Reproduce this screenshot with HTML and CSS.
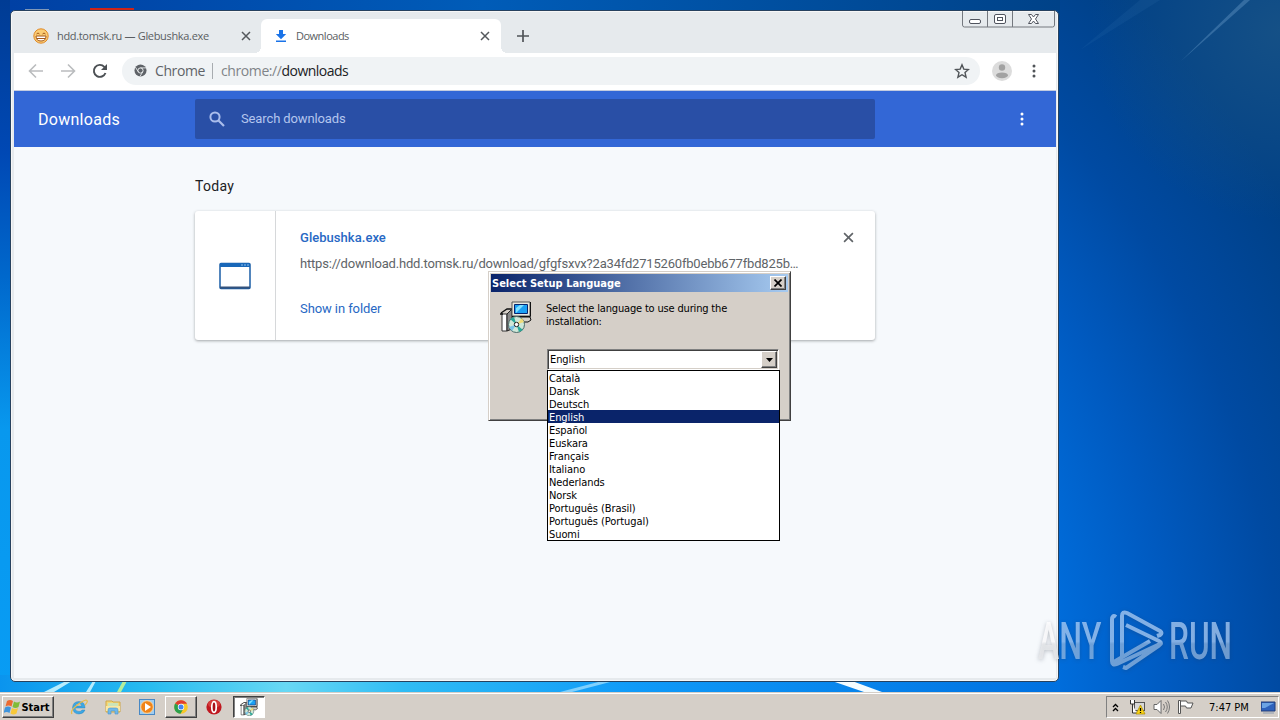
FILE: index.html
```html
<!DOCTYPE html>
<html lang="en">
<head>
    <meta charset="UTF-8">
    <meta name="viewport" content="width=device-width, initial-scale=1.0">
    <title>Downloads</title>
    <link rel="stylesheet" href="styles.css">
</head>
<body>
    <!-- shared icons -->
    <svg class="defs" width="0" height="0">
        <symbol id="setup-icon" viewBox="0 0 32 32">
            <path d="M2 13h5v17H2z" fill="#fff" stroke="#333"/>
            <path d="M7 13l5-5v20l-5 2z" fill="#888" stroke="#222"/>
            <path d="M0 13h3M1 12l6-4h6" fill="none" stroke="#111" stroke-width="1.3"/>
            <path d="M12 1h18v14H12z" fill="#e8e8e0" stroke="#555"/>
            <path d="M30.500 1v14.500H12" fill="none" stroke="#111"/>
            <path d="M14.500 3.500h13v9h-13z" fill="#1ba0f4" stroke="#06246c"/>
            <path d="M16 12V7l4-3h4z" fill="#7ce0ff"/>
            <path d="M14 16h16l1 3-3 2H14z" fill="#d4d0c8" stroke="#111"/>
            <circle cx="16.500" cy="23.500" r="8" fill="#cfe8d8" stroke="#4a6a68"/>
            <path d="M16.500 23.500L10 18l4-2zM16.500 23.500L23 29l-4 2z" fill="#2ba898"/>
            <path d="M16.500 23.500L22 17l2 4z" fill="#f1dc78"/>
            <path d="M16.500 23.500L9 26l3 4z" fill="#78c4e8"/>
            <circle cx="16.500" cy="23.500" r="2.200" fill="#fff" stroke="#222"/>
        </symbol>
        <symbol id="cross" viewBox="0 0 10 10">
            <path d="M1 1l8 8M9 1l-8 8" fill="none" stroke="currentColor" stroke-width="1.500"/>
        </symbol>
        <symbol id="dots" viewBox="0 0 4 16">
            <circle cx="2" cy="3" r="1.500"/><circle cx="2" cy="8" r="1.500"/><circle cx="2" cy="13" r="1.500"/>
        </symbol>
    </svg>

    <div class="desktop">
        <svg class="wallpaper" width="1280" height="692" viewBox="0 0 1280 692">
            <defs>
                <radialGradient id="glow" gradientUnits="userSpaceOnUse" cx="420" cy="700" r="1000">
                    <stop offset="0" stop-color="#22b4fa"/>
                    <stop offset=".3" stop-color="#0c96f4"/>
                    <stop offset=".62" stop-color="#0070e0"/>
                    <stop offset=".75" stop-color="#005ac0"/>
                    <stop offset=".86" stop-color="#004aa2"/>
                    <stop offset="1" stop-color="#004086"/>
                </radialGradient>
                <linearGradient id="left" x2="0" y2="1">
                    <stop offset="0" stop-color="#003c94"/>
                    <stop offset=".22" stop-color="#0048b4"/>
                    <stop offset=".4" stop-color="#0068cc"/>
                    <stop offset=".62" stop-color="#0898ee"/>
                    <stop offset="1" stop-color="#089cf4"/>
                </linearGradient>
                <linearGradient id="top">
                    <stop offset="0" stop-color="#0040a4"/>
                    <stop offset=".45" stop-color="#005cb8"/>
                    <stop offset="1" stop-color="#004288"/>
                </linearGradient>
                <linearGradient id="bottom">
                    <stop offset="0" stop-color="#0a94ee"/>
                    <stop offset=".14" stop-color="#28bcf0"/>
                    <stop offset=".27" stop-color="#68d8f4"/>
                    <stop offset=".38" stop-color="#30bcf4"/>
                    <stop offset=".6" stop-color="#109af8"/>
                    <stop offset="1" stop-color="#0070e0"/>
                </linearGradient>
                <radialGradient id="corner" gradientUnits="userSpaceOnUse" cx="1280" cy="30" r="190">
                    <stop offset="0" stop-color="#1a5486" stop-opacity=".8"/>
                    <stop offset="1" stop-color="#1a5486" stop-opacity="0"/>
                </radialGradient>
            </defs>
            <rect width="1280" height="692" fill="url(#glow)"/>
            <rect width="20" height="692" fill="url(#left)"/>
            <rect x="10" width="1050" height="20" fill="url(#top)"/>
            <rect y="675" width="1060" height="17" fill="url(#bottom)"/>
            <rect x="1060" width="220" height="260" fill="url(#corner)"/>
            <path d="M1180 62L1244 0h6z" fill="#78a8d4" opacity=".35"/>
            <path d="M1080 50L1140 0h20z" fill="#4080c0" opacity=".12"/>
            <path d="M90 8h44v4H90z" fill="#cf2418"/>
            <path d="M25 9h24v3H25z" fill="#8098b8"/>
            <path d="M44 692l22-11h6l-18 11zM86 692l7-11h3l-6 11z" fill="#b8ecfc"/>
            <path d="M117 692l6-11h4l-6 11z" fill="#b4ee9c"/>
            <path d="M560 692l42-11h12l-42 11z" fill="#80d0fc"/>
            <path d="M832 681h20l30 11h-18z" fill="#f4fcff"/>
        </svg>

        <div class="browser">
            <div class="tabstrip">
                <div class="tab">
                    <svg class="favicon" viewBox="0 0 16 16">
                        <circle cx="8" cy="8" r="7.200" fill="#fbcd74" stroke="#e08a28"/>
                        <path d="M3 8h10q0 5-5 5T3 8z" fill="#fff" stroke="#a4581c"/>
                        <path d="M3.500 6q1.500-2 3 0M9.500 6q1.500-2 3 0M4 10.500h8" fill="none" stroke="#a4581c"/>
                    </svg>
                    <span class="tab-title">hdd.tomsk.ru — Glebushka.exe</span>
                    <svg class="tab-close"><use href="#cross"/></svg>
                </div>
                <div class="tab active">
                    <svg class="favicon" viewBox="0 0 16 16">
                        <path d="M6 2h4v4h3.200L8 11.200 2.800 6H6zM3 12.500h10V14H3z" fill="#1a73e8"/>
                    </svg>
                    <span class="tab-title">Downloads</span>
                    <svg class="tab-close"><use href="#cross"/></svg>
                </div>
                <svg class="new-tab" viewBox="0 0 12 12"><path d="M6 0v12M0 6h12" stroke="#505458" stroke-width="1.700"/></svg>
                <svg class="window-controls" width="93" height="17" viewBox="0 0 93 17">
                    <path d="M.5 0v14q0 2 2 2h88q2 0 2-2V0M25.500 0v16M50.500 0v16" fill="none" stroke="#74787e"/>
                    <g fill="#fff" stroke="#50545e">
                        <rect x="7.500" y="8.500" width="11" height="4" rx="1.500"/>
                        <rect x="32.500" y="3.500" width="11" height="9" rx="1.500"/>
                        <rect x="35.500" y="6.500" width="5" height="3"/>
                        <path d="M66.500 3.500h3l2 2.500 2-2.500h3L73.500 8l3 4.500h-3l-2-2.500-2 2.500h-3l3-4.500z"/>
                    </g>
                </svg>
            </div>

            <div class="toolbar">
                <svg class="nav" viewBox="0 0 16 16"><path d="M15 8H2M8 1.500L1.500 8 8 14.500" fill="none" stroke="#babcbe" stroke-width="1.600"/></svg>
                <svg class="nav" viewBox="0 0 16 16"><path d="M1 8h13M8 1.500L14.500 8 8 14.500" fill="none" stroke="#babcbe" stroke-width="1.600"/></svg>
                <svg class="nav" viewBox="0 0 16 16">
                    <path d="M13.500 10a6 6 0 1 1-1.200-6.200L14 5.500" fill="none" stroke="#4c5054" stroke-width="1.900"/>
                    <path d="M15 1v6H9z" fill="#4c5054"/>
                </svg>
                <div class="omnibox">
                    <svg class="chrome-mark" viewBox="0 0 14 14">
                        <circle cx="7" cy="7" r="6.500" fill="#5f6368"/>
                        <circle cx="7" cy="7" r="2.800" fill="#5f6368" stroke="#f1f3f4"/>
                        <path d="M7 4.200h6M4.600 8.400L1.600 3.500M9.400 8.400L6.500 13.300" stroke="#f1f3f4" stroke-width=".9"/>
                    </svg>
                    <span class="scheme-name">Chrome</span>
                    <span class="divider"></span>
                    <span class="url">chrome://<b>downloads</b></span>
                    <svg class="star" viewBox="0 0 16 16"><path d="M8 1.800l1.800 4.300 4.700.4L11 9.600l1.100 4.600L8 11.700l-4.100 2.500L5 9.600 1.500 6.500l4.700-.4z" fill="none" stroke="#505458" stroke-width="1.400"/></svg>
                </div>
                <svg class="avatar" viewBox="0 0 20 20">
                    <circle cx="10" cy="10" r="10" fill="#dcdcdc"/>
                    <circle cx="10" cy="6.500" r="3.200" fill="#a2a2a2"/>
                    <ellipse cx="10" cy="14.300" rx="6" ry="2.900" fill="#a2a2a2"/>
                </svg>
                <svg class="menu-dots"><use href="#dots"/></svg>
            </div>

            <div class="page-header">
                <span class="page-title">Downloads</span>
                <div class="search">
                    <svg class="search-icon" viewBox="0 0 16 16"><circle cx="6" cy="6" r="4.600" fill="none" stroke="#a9bdec" stroke-width="2"/><path d="M9.500 9.500l5.500 5.500" stroke="#a9bdec" stroke-width="2.200"/></svg>
                    <span>Search downloads</span>
                </div>
                <svg class="menu-dots white"><use href="#dots"/></svg>
            </div>

            <div class="page">
                <div class="date">Today</div>
                <div class="card">
                    <div class="file-icon">
                        <svg width="32" height="28" viewBox="0 0 32 28">
                            <rect x="1" y="1.500" width="30" height="25" rx="1" fill="#fff" stroke="#1a5ea6" stroke-width="1.500"/>
                            <path d="M1 1h30v4H1z" fill="#1867b8"/>
                            <path d="M22 3h8" stroke="#8cc0ee" stroke-dasharray="2 1"/>
                            <path d="M1 25.500h30" stroke="#34527c" stroke-width="2"/>
                        </svg>
                    </div>
                    <div class="file-info">
                        <div class="file-name">Glebushka.exe</div>
                        <div class="file-url">https://download.hdd.tomsk.ru/download/gfgfsxvx?2a34fd2715260fb0ebb677fbd825b…</div>
                        <div class="file-action">Show in folder</div>
                    </div>
                    <svg class="remove"><use href="#cross"/></svg>
                </div>
            </div>
        </div>

        <div class="dialog">
            <div class="dialog-title">
                <span>Select Setup Language</span>
                <div class="dialog-close"><svg width="8" height="8" viewBox="0 0 8 8"><path d="M.5.5l7 7M7.500.5l-7 7" stroke="#000" stroke-width="1.700"/></svg></div>
            </div>
            <div class="dialog-body">
                <svg class="dialog-icon"><use href="#setup-icon"/></svg>
                <div class="dialog-main">
                    <div class="dialog-text">Select the language to use during the<br>installation:</div>
                    <div class="combo">
                        <span>English</span>
                        <div class="combo-arrow"><svg width="7" height="4" viewBox="0 0 7 4"><path d="M0 0h7L3.500 4z"/></svg></div>
                        <ul class="options">
                            <li>Català</li>
                            <li>Dansk</li>
                            <li>Deutsch</li>
                            <li class="selected">English</li>
                            <li>Español</li>
                            <li>Euskara</li>
                            <li>Français</li>
                            <li>Italiano</li>
                            <li>Nederlands</li>
                            <li>Norsk</li>
                            <li>Português (Brasil)</li>
                            <li>Português (Portugal)</li>
                            <li>Suomi</li>
                        </ul>
                    </div>
                </div>
            </div>
        </div>

        <svg class="watermark" width="240" height="80" viewBox="0 0 240 80">
            <defs>
                <linearGradient id="fade" gradientUnits="userSpaceOnUse" x1="0" y1="5" x2="0" y2="68">
                    <stop offset=".5" stop-color="#b4d4fa" stop-opacity=".72"/>
                    <stop offset=".54" stop-color="#a4c4e8" stop-opacity=".66"/>
                </linearGradient>
                <linearGradient id="fade-text" gradientUnits="userSpaceOnUse" x1="0" y1="-49" x2="0" y2="14">
                    <stop offset=".5" stop-color="#b4d4fa" stop-opacity=".72"/>
                    <stop offset=".54" stop-color="#a4c4e8" stop-opacity=".66"/>
                </linearGradient>
                <linearGradient id="fade-light" gradientUnits="userSpaceOnUse" x1="0" y1="-49" x2="0" y2="14">
                    <stop offset=".5" stop-color="#fff"/>
                    <stop offset=".54" stop-color="#e6e8ea"/>
                </linearGradient>
            </defs>
            <g fill="url(#fade-text)" class="watermark-text">
                <text transform="translate(3 54) scale(.63 1)"><tspan class="light">A</tspan>NY</text>
                <text transform="translate(134 54) scale(.62 1)">RUN</text>
            </g>
            <path d="M81 12q-4-3-4 3v41q0 5 5 3l45-21M87 51V11q0-5 5-3l33 18q3 2 0 4l-3 1M91 20l33 16q4 2 0 4.500L91 63l-3-1M77 58l38-22" fill="none" stroke="url(#fade)" stroke-width="4" stroke-linejoin="round"/>
        </svg>
    </div>

    <div class="taskbar">
        <div class="task start">
            <svg width="17" height="16" viewBox="0 0 17 16">
                <path d="M3 2q3-2 6 0L7.500 7.500q-3-2-6 0z" fill="#ec6a30"/>
                <path d="M10 2.500q3 2 6 0L14.500 8q-3 2-6 0z" fill="#80bc38"/>
                <path d="M1 8.500q3-2 6 0L5.500 14q-3-2-6 0z" fill="#3f94dc"/>
                <path d="M8 9q3 2 6 0l-1.500 5.500q-3 2-6 0z" fill="#f8c838"/>
            </svg>
            <span>Start</span>
        </div>
        <div class="quick">
            <svg width="18" height="18" viewBox="0 0 18 18">
                <path d="M15 10H5q.5 3.500 4 3.500 2 0 3-1.500h3q-1.500 4-6 4-6 0-6.500-6.500Q3 3.500 9 3.500q6 0 6 6.500zM5.200 8h6.600Q11.500 5.500 8.600 5.500 5.800 5.500 5.200 8z" fill="#3ca8e4" stroke="#2278b8" stroke-width=".4"/>
                <path d="M2 16q-2-3 4-8t10-6q3 1-1 5" fill="none" stroke="#e8bc48" stroke-width="1.200"/>
            </svg>
            <svg width="18" height="18" viewBox="0 0 18 18">
                <path d="M2 3h6l1 1h7v10H2z" fill="#f4d878" stroke="#d0a848"/>
                <path d="M4 5h10v3H4z" fill="#cce4b8"/>
                <path d="M2 8h14v5H2z" fill="#fae8a4"/>
                <path d="M4 16v-4q0-2 2-2h6q2 0 2 2v4h-3v-3H7v3z" fill="#70b8e8" stroke="#4c94cc" stroke-width=".6"/>
            </svg>
            <svg width="18" height="18" viewBox="0 0 18 18">
                <rect x="1.500" y="1.500" width="15" height="15" fill="#a0cdf0" stroke="#4888c4"/>
                <circle cx="9" cy="9" r="6.300" fill="#f08418" stroke="#fbd8a4"/>
                <path d="M7 5l6 4-6 4z" fill="#fff"/>
            </svg>
        </div>
        <div class="task app">
            <svg width="14" height="14" viewBox="0 0 14 14">
                <circle cx="7" cy="7" r="6.800" fill="#f8c828"/>
                <path d="M7 7L1.100 3.600A6.800 6.800 0 0 1 13 3.800H7z" fill="#e03c30"/>
                <path d="M7 7L1.100 3.600A6.800 6.800 0 0 0 6.500 13.800L9.500 8.500z" fill="#2ca04c"/>
                <circle cx="7" cy="7" r="3.200" fill="#fff"/>
                <circle cx="7" cy="7" r="2.500" fill="#4484f0"/>
            </svg>
        </div>
        <svg class="opera" width="16" height="16" viewBox="0 0 16 16">
            <circle cx="8" cy="8" r="7.600" fill="#c01820"/>
            <ellipse cx="8" cy="5" rx="6" ry="4" fill="#e45850" opacity=".6"/>
            <ellipse cx="8" cy="8" rx="2.200" ry="5.300" fill="#a81018" stroke="#fff" stroke-width="1.700"/>
        </svg>
        <div class="task app pressed"><svg width="18" height="18"><use href="#setup-icon"/></svg></div>

        <div class="tray">
            <svg width="7" height="9" viewBox="0 0 7 9"><path d="M1 4l2.500-2.500L6 4M1 8l2.500-2.500L6 8" fill="none" stroke="#000" stroke-width="1.300"/></svg>
            <svg class="net" width="17" height="16" viewBox="0 0 17 16">
                <rect x="5.500" y="3.500" width="10" height="8" fill="#d8d8d8" stroke="#555"/>
                <path d="M1.500 1v4h4V1M3.500 5v9h4" fill="#fff" stroke="#333"/>
                <path d="M11.500 6l4.500 9H7z" fill="#fcd414" stroke="#a88800" stroke-width=".7"/>
                <path d="M11.500 9v3M11.500 13v1" stroke="#000" stroke-width="1.300"/>
            </svg>
            <svg class="sound" width="17" height="16" viewBox="0 0 17 16">
                <path d="M1 5.500h3L8 1.500v13l-4-4H1z" fill="#fff" stroke="#666"/>
                <path d="M10.500 5q2 3 0 6M12.500 3q3.500 5 0 10M14.500 1.500q4 6.500 0 13" fill="none" stroke="#777"/>
            </svg>
            <svg class="flag" width="17" height="16" viewBox="0 0 17 16"><path d="M1.500 1.500h2v13h-2zM3.500 2h6l1 2h5.500l-2 5H9.500l-1-2h-5z" fill="#fff" stroke="#555"/></svg>
            <span class="clock">7:47 PM</span>
            <svg class="show-desktop" width="15" height="13" viewBox="0 0 15 13">
                <path d="M0 1h14v9H0z" fill="#2e62bc" stroke="#203c78"/>
                <path d="M1 2h12L4 7H1z" fill="#6ca4e4"/>
                <path d="M2 12h11" stroke="#8c9cb0"/>
            </svg>
        </div>
    </div>
</body>
</html>
```
FILE: styles.css
```css
* {
    box-sizing: border-box;
}

body {
    margin: 0;
    width: 1280px;
    height: 720px;
    display: flex;
    flex-direction: column;
    overflow: hidden;
    font-family: "DejaVu Sans Condensed", "DejaVu Sans", sans-serif;
    font-size: 11px;
    color: #000;
}

svg {
    display: block;
    flex: none;
}

.defs {
    position: absolute;
}

.desktop {
    position: relative;
    height: 692px;
    flex: none;
}

/* Browser window */
.browser {
    position: absolute;
    left: 10px;
    top: 10px;
    width: 1049px;
    height: 672px;
    display: flex;
    flex-direction: column;
    border: 1px solid #27425f;
    border-radius: 5px;
    background: #e6eaed;
    box-shadow: inset 0 0 0 1px #f7f7f7;
    padding: 0 2px 3px 3px;
}

.tabstrip {
    height: 42px;
    display: flex;
    align-items: flex-start;
    padding-left: 7px;
}

.tab {
    width: 240px;
    height: 34px;
    margin-top: 8px;
    padding: 0 10px 1px 12px;
    display: flex;
    align-items: center;
    color: #5a5e62;
}

.tab.active {
    position: relative;
    padding-right: 11px;
    background: #fff;
    border-radius: 6px 6px 0 0;
}

.tab.active::before,
.tab.active::after {
    content: "";
    position: absolute;
    bottom: 0;
    width: 6px;
    height: 6px;
}

.tab.active::before {
    left: -6px;
    background: radial-gradient(circle at 0 0, transparent 6px, #fff 6px);
}

.tab.active::after {
    right: -6px;
    background: radial-gradient(circle at 100% 0, transparent 6px, #fff 6px);
}

.favicon {
    width: 16px;
    height: 16px;
    margin-right: 7px;
}

.tab-title {
    font-family: "Open Sans", sans-serif;
    font-size: 11px;
    letter-spacing: -0.33px;
    flex: 1;
    padding: 0 0 1px 1px;
    white-space: nowrap;
}

.active .tab-title {
    padding-left: 0;
    letter-spacing: -0.5px;
}

.tab-close {
    width: 10px;
    height: 10px;
    color: #54585c;
}

.new-tab {
    width: 12px;
    height: 12px;
    margin: 19px 0 0 16px;
}

.window-controls {
    margin: 0 1px 0 auto;
}

.toolbar {
    height: 38px;
    flex: none;
    display: flex;
    align-items: center;
    background: #fff;
    border-bottom: 1px solid #c4cce0;
    padding: 0 20px 2px 14px;
}

.nav {
    width: 16px;
    height: 16px;
    margin-right: 16px;
}

.omnibox {
    width: 858px;
    height: 28px;
    margin-left: -2px;
    padding: 0 10px 0 12px;
    display: flex;
    align-items: center;
    border-radius: 14px;
    background: #f0f3f5;
    font-family: "Open Sans", sans-serif;
    font-size: 14px;
    letter-spacing: -0.4px;
    color: #5f6368;
}

.chrome-mark {
    width: 13px;
    height: 13px;
    margin-right: 8px;
}

.divider {
    width: 1px;
    height: 16px;
    margin: 0 8px 0 7px;
    background: #a8acb0;
}

.url {
    flex: 1;
    color: #808488;
}

.url b {
    font-weight: 400;
    letter-spacing: -0.55px;
    color: #202124;
}

.star {
    width: 16px;
    height: 16px;
}

.avatar {
    width: 20px;
    height: 20px;
    margin-left: 12px;
}

.menu-dots {
    width: 4px;
    height: 16px;
    margin-left: auto;
    fill: #505458;
}

.menu-dots.white {
    fill: #fff;
}

/* Downloads page */
.page-header {
    height: 56px;
    flex: none;
    display: flex;
    align-items: center;
    padding: 0 32px 0 24px;
    background: #3367d6;
    color: #fff;
    font-family: Roboto, sans-serif;
}

.page-title {
    width: 157px;
    font-size: 16px;
    letter-spacing: 0.28px;
}

.search {
    width: 680px;
    height: 40px;
    display: flex;
    align-items: center;
    padding: 0 0 1px 14px;
    border-radius: 2px;
    background: #294fa6;
    color: #b4c6ee;
    font-size: 13px;
    letter-spacing: -0.12px;
}

.search-icon {
    width: 16px;
    height: 16px;
    margin-right: 16px;
}

.page {
    flex: 1;
    padding: 29px 181px 0;
    background: #f6f9fc;
    font-family: Roboto, sans-serif;
}

.date {
    height: 35px;
    line-height: 21px;
    font-size: 14px;
    letter-spacing: 0.3px;
    color: #202124;
}

.card {
    width: 680px;
    height: 129px;
    display: flex;
    background: #fff;
    border-radius: 3px;
    box-shadow: 0 1px 3px rgba(60, 64, 67, 0.45);
}

.file-icon {
    width: 81px;
    display: flex;
    align-items: center;
    justify-content: center;
    border-right: 1px solid #d6d8da;
}

.file-info {
    flex: 1;
    padding: 18px 0 0 24px;
    font-size: 13px;
    letter-spacing: -0.09px;
    line-height: 18px;
    white-space: nowrap;
}

.file-name {
    font-weight: 500;
    letter-spacing: 0.04px;
    color: #2768c4;
}

.file-url {
    margin-top: 8px;
    letter-spacing: -0.19px;
    color: #606468;
}

.file-action {
    margin-top: 27px;
    color: #2768c4;
}

.remove {
    width: 11px;
    height: 11px;
    margin: 21px 21px 0 0;
    color: #606468;
}

/* Setup dialog */
.dialog {
    position: absolute;
    left: 488px;
    top: 271px;
    width: 303px;
    height: 150px;
    padding: 2px;
    background: #d5cfc8;
    border: 1px solid;
    border-color: #d5cfc8 #404040 #404040 #d5cfc8;
    box-shadow: inset 1px 1px #fff, inset -1px -1px #808080;
}

.dialog-title {
    height: 18px;
    display: flex;
    align-items: center;
    justify-content: space-between;
    padding: 0 2px 0 1px;
    background: linear-gradient(to right, #0a246a, #a6caf0);
    color: #fff;
    font-weight: bold;
}

.dialog-close,
.combo-arrow {
    width: 16px;
    height: 14px;
    display: flex;
    align-items: center;
    justify-content: center;
    background: #d5cfc8;
    border: 1px solid;
    border-color: #fff #404040 #404040 #fff;
    box-shadow: inset -1px -1px #808080;
}

.dialog-body {
    display: flex;
    padding: 9px 9px 0;
}

.dialog-icon {
    width: 32px;
    height: 32px;
    margin-right: 14px;
}

.dialog-main {
    flex: 1;
    padding-top: 1px;
}

.dialog-text {
    height: 47px;
    line-height: 13px;
    letter-spacing: -0.17px;
    white-space: nowrap;
}

.combo {
    position: relative;
    width: 232px;
    height: 21px;
    margin-left: 1px;
    display: flex;
    align-items: center;
    justify-content: space-between;
    padding: 0 1px 0 2px;
    background: #fff;
    border: 1px solid;
    border-color: #808080 #fff #fff #808080;
    box-shadow: inset 1px 1px #404040, inset -1px -1px #d5cfc8;
    letter-spacing: -0.08px;
}

.combo-arrow {
    height: 17px;
}

.options {
    position: absolute;
    left: -1px;
    top: 20px;
    width: 233px;
    margin: 0;
    padding: 0;
    list-style: none;
    background: #fff;
    border: 1px solid #000;
}

.options li {
    height: 13px;
    line-height: 15px;
    padding-left: 1px;
}

.options .selected {
    background: #0a246a;
    color: #fff;
}

.watermark {
    position: absolute;
    left: 1035px;
    top: 605px;
    filter: drop-shadow(0 1px 2px rgba(40, 50, 70, 0.35));
}

.watermark-text {
    font-family: Roboto, sans-serif;
    font-size: 51px;
    font-weight: 500;
}

.watermark-text .light {
    fill: url(#fade-light);
    fill-opacity: 0.8;
}

/* Taskbar */
.taskbar {
    height: 28px;
    display: flex;
    align-items: center;
    padding: 1px 1px 0 2px;
    background: #d5cfc8;
    border-top: 1px solid #d5cfc8;
    box-shadow: inset 0 1px #fff;
}

.task {
    height: 22px;
    display: flex;
    align-items: center;
    justify-content: center;
    border: 1px solid;
    border-color: #fff #404040 #404040 #fff;
    box-shadow: inset -1px -1px #808080;
}

.start {
    width: 52px;
    padding-right: 2px;
    font-weight: bold;
}

.quick {
    display: flex;
    gap: 16px;
    margin: 0 9px 0 16px;
}

.app {
    width: 32px;
}

.opera {
    margin: 0 11px 0 9px;
}

.pressed {
    background: #fff;
    border-color: #404040 #fff #fff #404040;
    box-shadow: inset 1px 1px #808080;
}

.tray {
    width: 173px;
    height: 22px;
    margin-left: auto;
    display: flex;
    align-items: center;
    padding-left: 5px;
    border: 1px solid;
    border-color: #808080 #fff #fff #808080;
}

.net {
    margin-left: 10px;
}

.sound {
    margin-left: 7px;
}

.flag {
    margin-left: 7px;
}

.clock {
    margin-left: 15px;
    white-space: nowrap;
}

.show-desktop {
    margin: 0 2px 0 auto;
}
```
